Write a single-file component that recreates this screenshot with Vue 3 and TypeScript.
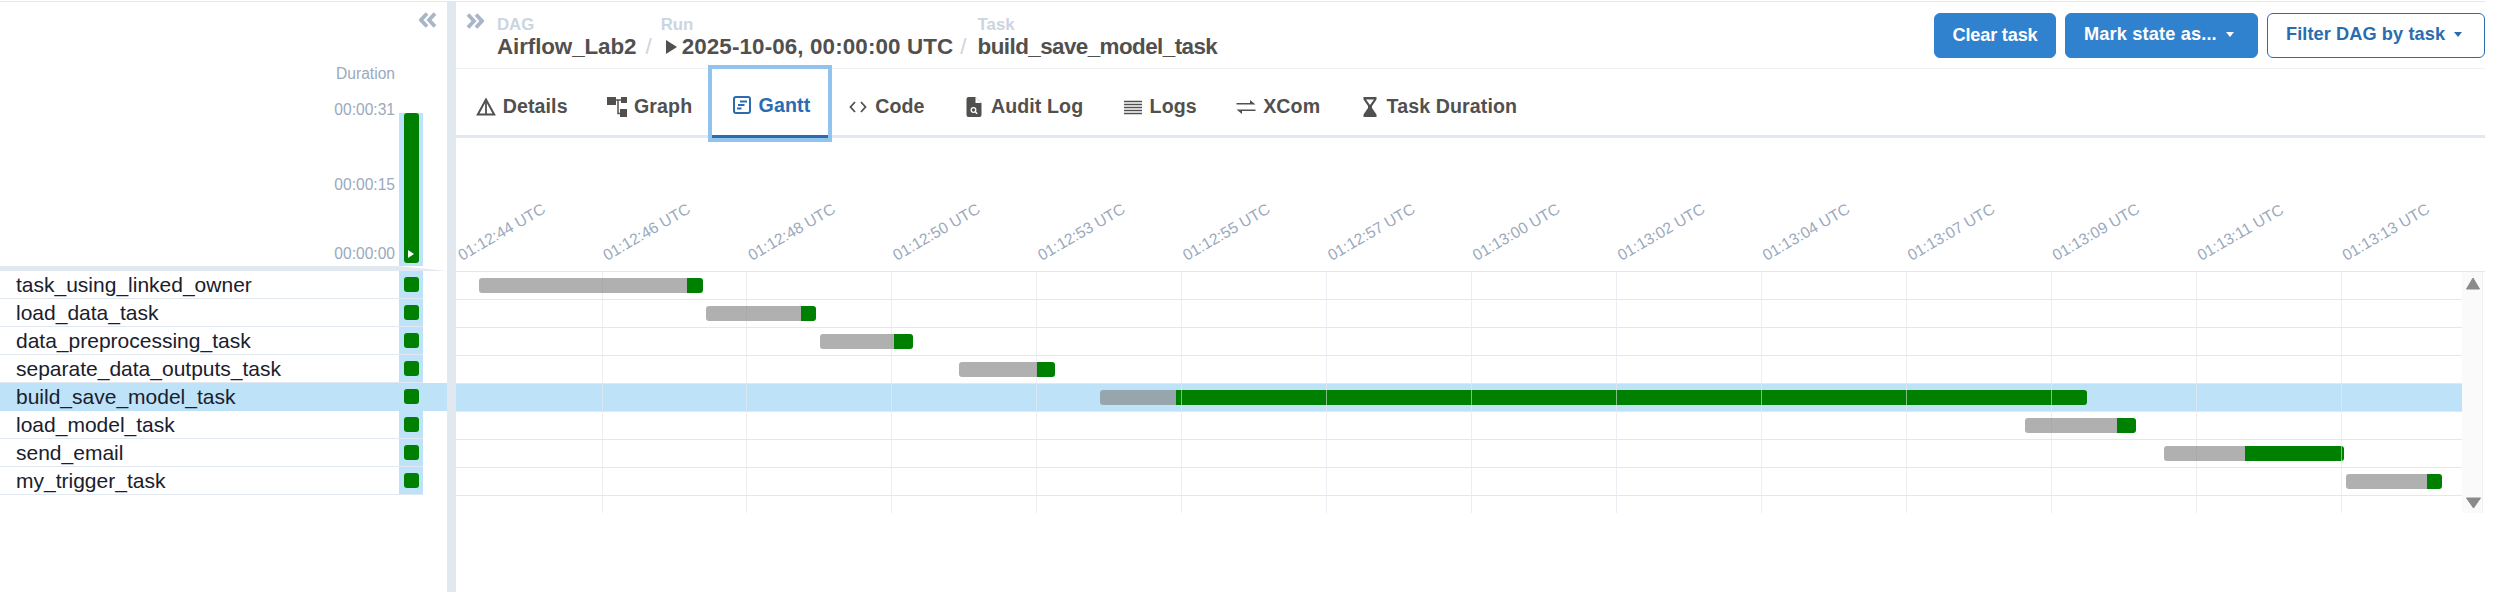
<template>
  <div class="page">
    <aside class="left">
      <div class="left-top">
        <div class="collapse-row">
          <svg class="chevrons" viewBox="0 0 18 16" width="18" height="16">
            <path d="M8 1.5 2 8l6 6.500M16 1.5 10 8l6 6.500" />
          </svg>
        </div>
        <div class="duration-title">Duration</div>
        <div class="duration-chart">
          <div class="duration-axis">
            <span class="axis-a">00:00:31</span>
            <span class="axis-b">00:00:15</span>
            <span class="axis-c">00:00:00</span>
          </div>
          <div class="duration-col">
            <div class="duration-bar">
              <svg class="play" viewBox="0 0 6 8" width="6" height="8"><path d="M0 0l6 4-6 4z" /></svg>
            </div>
          </div>
        </div>
      </div>
      <div class="band"></div>
      <div class="task-list">
        <div
          v-for="(task, index) in tasks"
          :key="task.name"
          class="task-row"
          :class="{ selected: index === selectedIndex }"
        >
          <span class="task-name">{{ task.name }}</span>
          <span class="task-cell"><i class="task-square"></i></span>
        </div>
      </div>
    </aside>

    <div class="divider"></div>

    <main class="main">
      <header class="header">
        <svg class="chevrons expand" viewBox="0 0 18 16" width="18" height="16">
          <path d="M2 1.5 8 8l-6 6.500M10 1.5 16 8l-6 6.500" />
        </svg>
        <div class="crumbs">
          <div class="crumb">
            <span class="crumb-label">DAG</span>
            <span class="crumb-value value-dag">Airflow_Lab2</span>
          </div>
          <span class="slash">/</span>
          <div class="crumb">
            <span class="crumb-label">Run</span>
            <span class="crumb-value value-run">
              <svg class="run-arrow" viewBox="0 0 11 14" width="11" height="14"><path d="M0 0l11 7-11 7z" />
              </svg>2025-10-06, 00:00:00 UTC
            </span>
          </div>
          <span class="slash slash-task">/</span>
          <div class="crumb">
            <span class="crumb-label">Task</span>
            <span class="crumb-value value-task">build_save_model_task</span>
          </div>
        </div>
        <div class="actions">
          <button class="btn btn-primary btn-clear">Clear task</button>
          <button class="btn btn-primary btn-mark">Mark state as...<i class="caret"></i></button>
          <button class="btn btn-outline btn-filter">Filter DAG by task<i class="caret"></i></button>
        </div>
      </header>

      <nav class="tabs">
        <a v-for="tab in tabs" :key="tab.label" class="tab" :class="{ active: tab.label === 'Gantt' }">
          <svg class="tab-icon" viewBox="0 0 20 20" width="20" height="20">
            <template v-if="tab.icon === 'details'">
              <path d="M10 2.500 1.800 17.500h16.400z" fill="none" stroke="currentColor" stroke-width="2" />
              <rect x="9.100" y="5" width="1.800" height="12" />
            </template>
            <template v-else-if="tab.icon === 'graph'">
              <rect x="0" y="0" width="9" height="8" />
              <rect x="14" y="0" width="6" height="6" />
              <rect x="13" y="12" width="7" height="8" />
              <path d="M9 3h5M11 3v13.500h2" fill="none" stroke="currentColor" stroke-width="1.500" />
            </template>
            <template v-else-if="tab.icon === 'gantt'">
              <rect x="2" y="2" width="16" height="16" rx="2" fill="none" stroke="currentColor" stroke-width="2" />
              <rect x="8" y="5.500" width="7" height="2" />
              <rect x="6" y="9" width="6.500" height="2" />
              <rect x="5" y="12.500" width="4.500" height="2" />
            </template>
            <template v-else-if="tab.icon === 'code'">
              <path d="M7 5 2.500 10 7 15M13 5l4.500 5L13 15" fill="none" stroke="currentColor" stroke-width="1.800" />
            </template>
            <template v-else-if="tab.icon === 'audit'">
              <path d="M4.500 0h7L17.500 6v12a2 2 0 0 1-2 2h-11a2 2 0 0 1-2-2V2a2 2 0 0 1 2-2z" />
              <path d="M11.500 0v6h6z" fill="#fff" />
              <circle cx="9.500" cy="13" r="2.300" fill="none" stroke="#fff" stroke-width="1.300" />
              <path d="M11.200 14.800l2 2" stroke="#fff" stroke-width="1.300" />
            </template>
            <template v-else-if="tab.icon === 'logs'">
              <path d="M1 4.500h18M1 7.500h18M1 10.500h18M1 13.500h18M1 16.500h18" fill="none" stroke="currentColor" stroke-width="1.300" />
            </template>
            <template v-else-if="tab.icon === 'xcom'">
              <path d="M14 3 19.500 7.500H.5v-1.500H14zM6 17 .5 12.500h19V14H6z" />
            </template>
            <template v-else>
              <path d="M3.500 0h13v2.500L12 9v2l4.500 6.500V20h-13v-2.500L8 11V9L3.500 2.500z" />
              <path d="M6 2.500h8L10 8z" fill="#fff" />
            </template>
          </svg>
          <span>{{ tab.label }}</span>
        </a>
      </nav>

      <svg class="chart" :viewBox="`0 0 ${chartWidth} ${chartHeight}`" :width="chartWidth" :height="chartHeight">
        <rect :x="0" :y="rowY(selectedIndex)" :width="gridRight" height="28" fill="#bee3f8" />
        <line :x1="0" :x2="chartWidth" :y1="rowY(0) + 0.5" :y2="rowY(0) + 0.5" stroke="#e2e8f0" />
        <line
          v-for="(task, index) in tasks"
          :key="`h-${task.name}`"
          x1="0"
          :x2="gridRight"
          :y1="rowY(index + 1) + 0.5"
          :y2="rowY(index + 1) + 0.5"
          stroke="#e2e8f0"
        />
        <line
          v-for="x in tickXs"
          :key="`v-${x}`"
          :x1="x"
          :x2="x"
          :y1="rowY(0)"
          :y2="chartHeight"
          stroke="#e2e8f0"
          stroke-opacity="0.7"
        />
        <template v-for="(task, index) in tasks" :key="`bar-${task.name}`">
          <path :d="leftRounded(task.start, task.mid, rowY(index) + 7)" fill="rgba(128,128,128,0.62)" />
          <path :d="rightRounded(task.mid, task.end, rowY(index) + 7)" fill="#008000" />
          <line
            v-for="x in tickXs.filter((t) => t > task.mid - originX && t < task.end - originX)"
            :key="`o-${x}`"
            :x1="x"
            :x2="x"
            :y1="rowY(index) + 7"
            :y2="rowY(index) + 22"
            stroke="#edf2f7"
            stroke-opacity="0.55"
          />
        </template>
        <text
          v-for="(label, i) in tickLabels"
          :key="label"
          class="tick"
          :transform="`translate(${firstLabelX + tickStep * i} ${labelY}) rotate(-30)`"
        >{{ label }}</text>
        <rect :x="gridRight" :y="rowY(0) + 1" width="20" :height="chartHeight - rowY(0) - 1" fill="#fafafa" />
        <rect :x="gridRight + 20" :y="rowY(0) + 1" width="1" :height="chartHeight - rowY(0) - 1" fill="#f0f0f0" />
        <path :d="`M${gridRight + 11} ${rowY(0) + 7}l6.500 11h-13z`" fill="#8a8a8a" stroke="#8a8a8a" stroke-linejoin="round" />
        <path :d="`M${gridRight + 4.5} ${chartHeight - 15}h14l-7 10z`" fill="#8a8a8a" stroke="#8a8a8a" stroke-linejoin="round" />
      </svg>
    </main>
  </div>
</template>

<script setup lang="ts">
interface GanttTask {
  name: string
  start: number
  mid: number
  end: number
}

const selectedIndex = 4

const tasks: GanttTask[] = [
  { name: 'task_using_linked_owner', start: 479, mid: 687, end: 703 },
  { name: 'load_data_task', start: 706, mid: 801, end: 816 },
  { name: 'data_preprocessing_task', start: 820, mid: 894, end: 913 },
  { name: 'separate_data_outputs_task', start: 959, mid: 1037, end: 1055 },
  { name: 'build_save_model_task', start: 1100, mid: 1176, end: 2087 },
  { name: 'load_model_task', start: 2025, mid: 2117, end: 2136 },
  { name: 'send_email', start: 2164, mid: 2245, end: 2344 },
  { name: 'my_trigger_task', start: 2346, mid: 2427, end: 2442 },
]

const tabs = [
  { label: 'Details', icon: 'details' },
  { label: 'Graph', icon: 'graph' },
  { label: 'Gantt', icon: 'gantt' },
  { label: 'Code', icon: 'code' },
  { label: 'Audit Log', icon: 'audit' },
  { label: 'Logs', icon: 'logs' },
  { label: 'XCom', icon: 'xcom' },
  { label: 'Task Duration', icon: 'duration' },
]

const tickLabels = [
  '01:12:44 UTC', '01:12:46 UTC', '01:12:48 UTC', '01:12:50 UTC', '01:12:53 UTC',
  '01:12:55 UTC', '01:12:57 UTC', '01:13:00 UTC', '01:13:02 UTC', '01:13:04 UTC',
  '01:13:07 UTC', '01:13:09 UTC', '01:13:11 UTC', '01:13:13 UTC',
]

// chart svg starts at x=456, y=138 of the page
const originX = 456
const originY = 138
const chartWidth = 2029
const chartHeight = 375
const gridRight = 2006
const tickStep = 144.94
const firstLabelX = 6
const labelY = 123

const tickXs = Array.from({ length: 13 }, (_, i) => Math.round(145.5 + tickStep * i) + 0.5)

function rowY(index: number): number {
  return 271 - originY + index * 28
}

function leftRounded(start: number, end: number, y: number): string {
  const x0 = start - originX
  const x1 = end - originX
  return `M${x1} ${y}H${x0 + 3}Q${x0} ${y} ${x0} ${y + 3}V${y + 12}Q${x0} ${y + 15} ${x0 + 3} ${y + 15}H${x1}Z`
}

function rightRounded(start: number, end: number, y: number): string {
  const x0 = start - originX
  const x1 = end - originX
  return `M${x0} ${y}H${x1 - 3}Q${x1} ${y} ${x1} ${y + 3}V${y + 12}Q${x1} ${y + 15} ${x1 - 3} ${y + 15}H${x0}Z`
}
</script>

<style scoped>
.page {
  display: flex;
  width: 2485px;
  height: 590px;
  margin-top: 1px;
  border-top: 1px solid #e2e8f0;
  font-family: 'Liberation Sans', Arial, sans-serif;
  color: #51504f;
  background: #fff;
}

.left {
  width: 447px;
  flex: none;
}

.left-top {
  height: 264px;
  display: flex;
  flex-direction: column;
}

.collapse-row {
  display: flex;
  justify-content: flex-end;
  padding: 10px 10px 0 0;
  height: 63px;
  box-sizing: border-box;
}

.chevrons {
  fill: none;
  stroke: #a9b6c8;
  stroke-width: 3.8;
}

.duration-title {
  height: 18px;
  line-height: 18px;
  padding-right: 52px;
  text-align: right;
  font-size: 15.6px;
  color: #9aa9bd;
}

.duration-chart {
  display: flex;
  justify-content: flex-end;
  height: 153px;
  margin-top: 30px;
  padding-right: 24px;
}

.duration-axis {
  display: flex;
  flex-direction: column;
  align-items: flex-end;
  padding-right: 4px;
  font-size: 15.6px;
  line-height: 18px;
  color: #9aa9bd;
}

.axis-a {
  margin-top: -12px;
}

.axis-b {
  margin-top: 57px;
}

.axis-c {
  margin-top: 51px;
}

.duration-col {
  width: 24px;
  background: #bee3f8;
  display: flex;
  justify-content: center;
}

.duration-bar {
  width: 15px;
  height: 150px;
  border-radius: 3px;
  background: #008000;
  display: flex;
  justify-content: center;
  align-items: flex-end;
  padding-bottom: 5px;
  box-sizing: border-box;
}

.play {
  fill: #fff;
}

.band {
  height: 5px;
  background: #e2e8f0;
  clip-path: polygon(0 0, 89% 0, 100% 100%, 0 100%);
}

.task-row {
  display: flex;
  width: 423px;
  height: 28px;
  box-sizing: border-box;
  border-bottom: 1px solid #e2e8f0;
}

.task-row.selected {
  width: 447px;
  background: #bee3f8;
  border-bottom-color: transparent;
}

.task-name {
  flex: 1;
  padding-left: 16px;
  font-size: 21px;
  line-height: 28px;
  color: #1a202c;
  white-space: nowrap;
}

.task-cell {
  width: 24px;
  background: #bee3f8;
  display: flex;
  justify-content: center;
  align-items: center;
}

.task-row.selected .task-cell {
  margin-right: 24px;
}

.task-square {
  width: 15px;
  height: 15px;
  border-radius: 3px;
  background: #008000;
}

.divider {
  width: 9px;
  flex: none;
  background: #e2e8f0;
}

.main {
  flex: 1;
  min-width: 0;
  display: flex;
  flex-direction: column;
}

.header {
  display: flex;
  height: 67px;
  box-sizing: border-box;
  border-bottom: 1px solid #edf2f7;
}

.expand {
  margin: 11px 0 0 10px;
  flex: none;
}

.crumbs {
  display: flex;
  margin-left: 13px;
  padding-top: 13px;
}

.crumb {
  display: flex;
  flex-direction: column;
}

.crumb-label {
  font-size: 16.8px;
  font-weight: 700;
  line-height: 19px;
  color: #cbd5e0;
}

.crumb-value {
  font-size: 22.4px;
  font-weight: 700;
  line-height: 26px;
  white-space: nowrap;
}

.value-dag {
  letter-spacing: -0.1px;
}

.value-run {
  letter-spacing: 0.12px;
}

.value-task {
  letter-spacing: -0.56px;
}

.run-arrow {
  fill: #51504f;
  margin: 0 5px 0 5px;
}

.slash {
  align-self: flex-start;
  margin: 19px 9px 0 9px;
  font-size: 22.4px;
  line-height: 26px;
  color: #cbd5e0;
}

.slash-task {
  margin-left: 7px;
  margin-right: 11px;
}

.actions {
  margin-left: auto;
  display: flex;
  gap: 9px;
  padding-top: 11px;
}

.btn {
  height: 45px;
  padding: 0;
  border: 1px solid #3182ce;
  border-radius: 6px;
  font: 700 18.2px 'Liberation Sans', Arial, sans-serif;
  white-space: nowrap;
  box-sizing: border-box;
}

.btn-clear {
  width: 122px;
  letter-spacing: -0.2px;
}

.btn-mark {
  width: 193px;
  padding: 0 0 3px 18px;
  text-align: left;
  letter-spacing: 0.15px;
}

.btn-filter {
  width: 218px;
  padding: 0 0 3px 18px;
  text-align: left;
  letter-spacing: 0.08px;
}

.btn-primary {
  background: #3182ce;
  color: #fff;
}

.btn-outline {
  background: #fff;
  border-color: #2b6cb0;
  color: #2b6cb0;
}

.caret {
  display: inline-block;
  margin-left: 9px;
  vertical-align: middle;
  border-top: 5px solid currentColor;
  border-left: 4.5px solid transparent;
  border-right: 4.5px solid transparent;
}

.tabs {
  display: flex;
  height: 69px;
  box-sizing: border-box;
  border-bottom: 3px solid #e2e8f0;
}

.tab {
  display: flex;
  align-items: center;
  gap: 7px;
  height: 66px;
  padding: 9px 19.7px 0;
  box-sizing: border-box;
  font-size: 19.6px;
  font-weight: 700;
  letter-spacing: 0.1px;
  color: #51504f;
  fill: #51504f;
  white-space: nowrap;
}

.tab.active {
  color: #2b6cb0;
  fill: #2b6cb0;
  border-bottom: 3px solid #2b6cb0;
  height: 69px;
  padding-right: 18.2px;
  padding-bottom: 3px;
  outline: 4px solid #90c4ee;
  position: relative;
}

.tab-icon {
  flex: none;
}

.chart {
  display: block;
  flex: none;
}

.tick {
  font-size: 15.7px;
  fill: #9aa9bd;
}
</style>
